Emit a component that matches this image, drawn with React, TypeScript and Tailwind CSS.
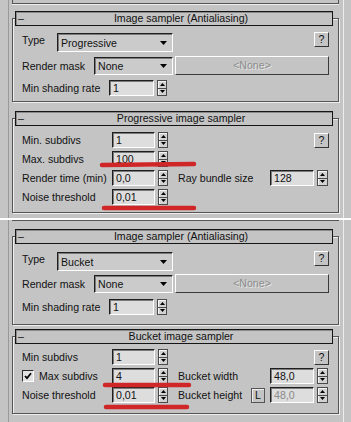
import React from 'react';

// 3ds Max / V-Ray style rollouts, two screenshots stacked

const Header = ({ title }: { title: string }) => (
  <div className="relative z-10 ml-[3px] mr-[6px] flex h-[15px] items-center border border-[#151515] bg-[#c4c4c4] shadow-[inset_1px_1px_0_#8a8a8a]">
    <span className="w-[14px] pl-[2px] leading-none">–</span>
    <span className="flex-1 text-center leading-none">{title}</span>
  </div>
);

const Box = ({ className, children }: { className: string; children: React.ReactNode }) => (
  <div
    className={`-mt-[8px] flex flex-col border border-[#555] pl-[9px] pr-[9px] shadow-[1px_1px_0_#eeeeee,inset_1px_1px_0_#eeeeee] ${className}`}
  >
    {children}
  </div>
);

const Arrow = () => (
  <svg width="7" height="4" viewBox="0 0 7 4">
    <path d="M0 0H7L3.5 4z" fill="#000" />
  </svg>
);

const Dropdown = ({ value, className }: { value: string; className: string }) => (
  <div
    className={`flex items-center justify-between border border-t-[#1e1e1e] border-l-[#1e1e1e] border-b-white border-r-white bg-[#cbcbcb] pl-[3px] pr-[5px] shadow-[inset_1px_1px_0_#7a7a7a] ${className}`}
  >
    <span className="pt-[2px] leading-none">{value}</span>
    <Arrow />
  </div>
);

const Field = ({ value, className, disabled }: { value: string; className: string; disabled?: boolean }) => (
  <div
    className={`flex h-[16px] items-center border border-t-[#1e1e1e] border-l-[#1e1e1e] border-b-white border-r-white bg-[#dddddd] pl-[3px] shadow-[inset_1px_1px_0_#7a7a7a] ${disabled ? 'text-[#8a8a8a]' : ''} ${className}`}
  >
    <span className="pt-[1px] leading-none">{value}</span>
  </div>
);

const Spinner = ({ className }: { className: string }) => (
  <div className={`flex h-[16px] w-[10px] flex-col border border-[#4a4a4a] bg-[#d2d2d2] shadow-[inset_1px_1px_0_#f4f4f4] ${className}`}>
    <div className="flex flex-1 items-center justify-center border-b border-[#4a4a4a]">
      <svg width="5" height="3" viewBox="0 0 5 3">
        <path d="M2.5 0L5 3H0z" fill="#000" />
      </svg>
    </div>
    <div className="flex flex-1 items-center justify-center">
      <svg width="5" height="3" viewBox="0 0 5 3">
        <path d="M0 0H5L2.5 3z" fill="#000" />
      </svg>
    </div>
  </div>
);

const Help = () => (
  <div className="flex h-[15px] w-[15px] items-center justify-center border border-t-white border-l-white border-b-[#333] border-r-[#333] leading-none">
    ?
  </div>
);

const SamplerRows = ({ type, rowB, rowC }: { type: string; rowB: string; rowC: string }) => (
  <>
    <div className="flex h-[20px] items-start">
      <span className="w-[35px] pt-[3px] leading-none">Type</span>
      <Dropdown value={type} className="mt-[1px] h-[19px] w-[116px]" />
      <div className="flex-1" />
      <Help />
    </div>
    <div className={`flex h-[19px] items-center ${rowB}`}>
      <span className="w-[72px] pt-[2px] leading-none">Render mask</span>
      <Dropdown value="None" className="h-[18px] w-[79px]" />
      <div className="ml-[2px] flex h-[19px] w-[154px] items-center justify-center border border-t-white border-l-white border-b-[#3a3a3a] border-r-[#3a3a3a] text-[#8c8c8c] [text-shadow:1px_1px_0_#e6e6e6]">
        &lt;None&gt;
      </div>
    </div>
    <div className={`flex h-[16px] items-center ${rowC}`}>
      <span className="w-[87px] leading-none">Min shading rate</span>
      <Field value="1" className="w-[45px]" />
      <Spinner className="ml-[3px]" />
    </div>
  </>
);

const Panel = ({ className, children }: { className: string; children: React.ReactNode }) => (
  <div className={`flex px-[8px] ${className}`}>
    <div className="flex flex-1 flex-col border-l border-r border-l-[#999] border-r-[#ededed] pl-[3px] pr-[4px]">
      {children}
    </div>
  </div>
);

export default function App() {
  return (
    <div className="relative h-[422px] w-[351px] overflow-hidden bg-[#c4c4c4] font-['Liberation_Sans',Arial,sans-serif] text-[10.6px] text-[#111]">
      {/* first screenshot: progressive */}
      <Panel className="h-[218px]">
        <div className="h-[4px] border-x border-b border-[#555] shadow-[0_1px_0_#eeeeee]" />

        <div className="mt-[7px]">
          <Header title="Image sampler (Antialiasing)" />
          <Box className="pt-[13px] pb-[5px]">
            <SamplerRows type="Progressive" rowB="mt-[4px]" rowC="mt-[5px]" />
          </Box>
        </div>

        <div className="mt-[9px]">
          <Header title="Progressive image sampler" />
          <Box className="gap-[3px] pt-[13px] pb-[7px]">
            <div className="flex h-[16px] items-center">
              <span className="w-[90px] leading-none">Min. subdivs</span>
              <Field value="1" className="w-[43px]" />
              <Spinner className="ml-[3px]" />
              <div className="flex-1" />
              <Help />
            </div>
            <div className="flex h-[16px] items-center">
              <span className="w-[90px] leading-none">Max. subdivs</span>
              <Field value="100" className="w-[43px]" />
              <Spinner className="ml-[3px]" />
            </div>
            <div className="flex h-[16px] items-center">
              <span className="w-[90px] leading-none">Render time (min)</span>
              <Field value="0,0" className="w-[43px]" />
              <Spinner className="ml-[3px]" />
              <span className="ml-[10px] w-[92px] leading-none">Ray bundle size</span>
              <Field value="128" className="w-[44px]" />
              <Spinner className="ml-[3px] w-[11px]" />
            </div>
            <div className="flex h-[16px] items-center">
              <span className="w-[90px] leading-none">Noise threshold</span>
              <Field value="0,01" className="w-[43px]" />
              <Spinner className="ml-[3px]" />
            </div>
          </Box>
        </div>
      </Panel>

      <div className="h-[2px] bg-white" />

      {/* second screenshot: bucket */}
      <Panel className="h-[202px]">
        <div className="h-[1px] border-b border-[#555]" />

        <div className="mt-[8px]">
          <Header title="Image sampler (Antialiasing)" />
          <Box className="pt-[14px] pb-[9px]">
            <SamplerRows type="Bucket" rowB="mt-[3px]" rowC="mt-[6px]" />
          </Box>
        </div>

        <div className="mt-[4px]">
          <Header title="Bucket image sampler" />
          <Box className="gap-[3px] pt-[12px] pb-[10px]">
            <div className="flex h-[16px] items-center">
              <span className="w-[90px] leading-none">Min subdivs</span>
              <Field value="1" className="w-[43px]" />
              <Spinner className="ml-[3px]" />
              <div className="flex-1" />
              <Help />
            </div>
            <div className="flex h-[16px] items-center">
              <div className="flex w-[90px] items-center">
                <div className="flex h-[12px] w-[12px] items-center justify-center border border-t-[#2a2a2a] border-l-[#2a2a2a] border-b-white border-r-white bg-[#e2e2e2]">
                  <svg width="8" height="8" viewBox="0 0 8 8">
                    <path d="M1 4L3 6.2L7 1.2" fill="none" stroke="#000" strokeWidth="1.8" />
                  </svg>
                </div>
                <span className="ml-[5px] leading-none">Max subdivs</span>
              </div>
              <Field value="4" className="w-[43px]" />
              <Spinner className="ml-[3px]" />
              <span className="ml-[10px] w-[92px] leading-none">Bucket width</span>
              <Field value="48,0" className="w-[44px]" />
              <Spinner className="ml-[3px] w-[11px]" />
            </div>
            <div className="flex h-[16px] items-center">
              <span className="w-[90px] leading-none">Noise threshold</span>
              <Field value="0,01" className="w-[43px]" />
              <Spinner className="ml-[3px]" />
              <span className="ml-[10px] w-[73px] leading-none">Bucket height</span>
              <div className="flex h-[15px] w-[14px] items-center justify-center border border-[#555] shadow-[inset_1px_1px_0_#eeeeee] leading-none">
                L
              </div>
              <Field value="48,0" className="ml-[5px] w-[44px]" disabled />
              <Spinner className="ml-[3px] w-[11px]" />
            </div>
          </Box>
        </div>
      </Panel>

      {/* red annotation strokes */}
      <svg className="pointer-events-none absolute left-0 top-0" width="351" height="422" viewBox="0 0 351 422">
        <g stroke="#cf2727" strokeWidth="4.5" strokeLinecap="round" fill="none">
          <path d="M102 165L194 164" />
          <path d="M104 208L194 208" />
          <path d="M105 385L189 385" />
          <path d="M106 407L187 407" />
        </g>
      </svg>
    </div>
  );
}
